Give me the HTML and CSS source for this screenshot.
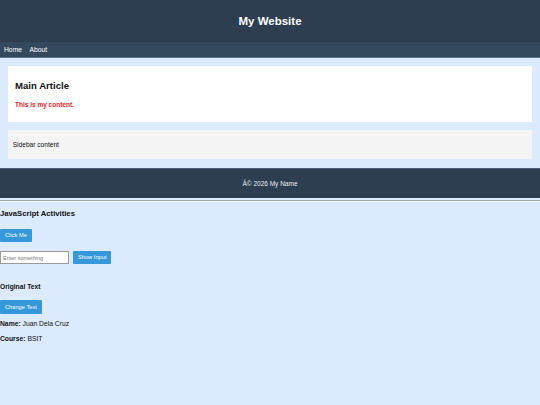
FILE: index.html
```html
<!DOCTYPE html>
<html lang="en">
<head>
<meta charset="utf-8">
<title>My Website</title>
<link rel="stylesheet" href="styles.css">
</head>
<body>
<header class="site-header"><h1 class="site-title">My Website</h1></header>
<nav class="site-nav"><a href="#">Home</a><a href="#">About</a></nav>
<div class="container">
  <article class="article">
    <h2 class="article-title">Main Article</h2>
    <p class="article-text">This is my content.</p>
  </article>
  <aside class="sidebar">Sidebar content</aside>
</div>
<footer class="site-footer">Â© 2026 My Name</footer>
<hr class="divider">
<section class="js">
  <h2 class="js-title">JavaScript Activities</h2>
  <div class="row row-first"><button class="btn">Click Me</button></div>
  <div class="row row-input"><input class="field" type="text" placeholder="Enter something"><button class="btn">Show Input</button></div>
  <h3 class="orig">Original Text</h3>
  <div class="row row-change"><button class="btn">Change Text</button></div>
  <p class="info info-name"><b>Name:</b> Juan Dela Cruz</p>
  <p class="info info-course"><b>Course:</b> BSIT</p>
</section>
</body>
</html>
```
FILE: styles.css
```css
* { box-sizing: border-box; }
html, body { margin: 0; padding: 0; }
body {
  background: #dbeafe;
  font-family: "Liberation Sans", Arial, sans-serif;
  color: #111;
}
.site-header {
  height: 42px;
  background: #2c3e50;
  display: flex;
  align-items: center;
  justify-content: center;
}
.site-title {
  margin: 0;
  color: #fff;
  font-size: 11.5px;
  line-height: 14px;
  font-weight: bold;
}
.site-nav {
  height: 16px;
  background: #34495e;
  display: flex;
  align-items: center;
  gap: 7.5px;
  padding-left: 4px;
  border-bottom: 1px solid #5d7590;
}
.site-nav a {
  color: #fff;
  text-decoration: none;
  font-size: 6.75px;
}
.container {
  padding: 8px 8px 9px;
}
.article {
  background: #fff;
  height: 56px;
  padding: 14px 7px 0;
}
.article-title {
  margin: 0;
  font-size: 9.6px;
  line-height: 12px;
  font-weight: bold;
}
.article-text {
  margin: 7.8px 0 0;
  color: #e02424;
  font-weight: bold;
  font-size: 6.5px;
  line-height: 9px;
}
.sidebar {
  margin-top: 8px;
  height: 29px;
  background: #f4f4f4;
  padding-left: 4.7px;
  display: flex;
  align-items: center;
  font-size: 6.6px;
}
.site-footer {
  height: 29.5px;
  background: #2c3e50;
  color: #e8edf2;
  font-size: 6.5px;
  display: flex;
  align-items: center;
  justify-content: center;
  border-top: 1px solid #4a607a;
}
.divider {
  margin: 2px 0 0;
  height: 0;
  border: 0;
  border-top: 1px solid #9aa4b0;
  border-bottom: 1px solid #f4f7fb;
}
.js { padding: 0; }
.js-title {
  margin: 7.5px 0 0;
  font-size: 7.7px;
  line-height: 10px;
  font-weight: bold;
}
.row { display: flex; align-items: stretch; gap: 4px; }
.row-first { margin-top: 9.6px; }
.row-input { margin-top: 9px; }
.row-change { margin-top: 9.2px; }
.btn {
  margin: 0;
  height: 13.4px;
  padding: 0 5px;
  border: 0;
  background: #3498db;
  color: #fff;
  font-family: "Liberation Sans", Arial, sans-serif;
  font-size: 5.7px;
  line-height: 13px;
  border-radius: 1px;
}
.field {
  margin: 0;
  width: 69px;
  height: 13.4px;
  padding: 0 2px;
  border: 1px solid #9a9a9a;
  background: #fff;
  font-family: "Liberation Sans", Arial, sans-serif;
  font-size: 5.5px;
}
.field::placeholder { color: #777; }
.orig {
  margin: 17.8px 0 0;
  font-size: 6.7px;
  line-height: 9px;
  font-weight: bold;
}
.info {
  margin: 0;
  font-size: 6.75px;
  line-height: 9px;
}
.info-name { margin-top: 5.5px; }
.info-course { margin-top: 6px; }
```
